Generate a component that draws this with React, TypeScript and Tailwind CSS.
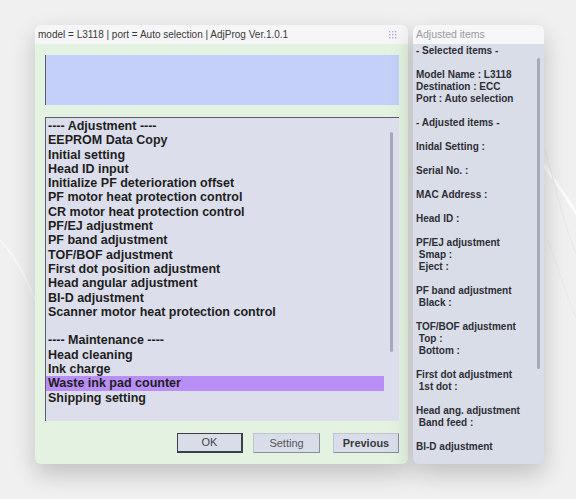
import React from "react";

const adjustItems: { t: string; sel?: boolean }[] = [
  { t: "---- Adjustment ----" },
  { t: "EEPROM Data Copy" },
  { t: "Initial setting" },
  { t: "Head ID input" },
  { t: "Initialize PF deterioration offset" },
  { t: "PF motor heat protection control" },
  { t: "CR motor heat protection control" },
  { t: "PF/EJ adjustment" },
  { t: "PF band adjustment" },
  { t: "TOF/BOF adjustment" },
  { t: "First dot position adjustment" },
  { t: "Head angular adjustment" },
  { t: "BI-D adjustment" },
  { t: "Scanner motor heat protection control" },
  { t: "\u00a0" },
  { t: "---- Maintenance ----" },
  { t: "Head cleaning" },
  { t: "Ink charge" },
  { t: "Waste ink pad counter", sel: true },
  { t: "Shipping setting" },
];

const rightLines: string[] = [
  "- Selected items -",
  "",
  "Model Name : L3118",
  "Destination : ECC",
  "Port : Auto selection",
  "",
  "- Adjusted items -",
  "",
  "Inidal Setting :",
  "",
  "Serial No. :",
  "",
  "MAC Address :",
  "",
  "Head ID :",
  "",
  "PF/EJ adjustment",
  " Smap :",
  " Eject :",
  "",
  "PF band adjustment",
  " Black :",
  "",
  "TOF/BOF adjustment",
  " Top :",
  " Bottom :",
  "",
  "First dot adjustment",
  " 1st dot :",
  "",
  "Head ang. adjustment",
  " Band feed :",
  "",
  "BI-D adjustment",
];

function Grip() {
  return (
    <svg width="8" height="8" viewBox="0 0 8 8" className="block">
      {[0, 1, 2].map((r) =>
        [0, 1, 2].map((c) => (
          <rect key={`${r}-${c}`} x={c * 3} y={r * 3} width="1.4" height="1.4" fill="#c79be0" />
        ))
      )}
    </svg>
  );
}

export default function App() {
  return (
    <div className="relative w-[576px] h-[499px] overflow-hidden bg-[#f0f0f1]" style={{ fontFamily: '"Liberation Sans", Arial, sans-serif' }}>
      <svg className="absolute inset-0" width="576" height="499" viewBox="0 0 576 499">
        <path d="M430 70 C 520 110, 560 190, 600 250" stroke="#ffffff" strokeWidth="3" fill="none" opacity="0.7" />
        <path d="M545 150 C 562 210, 572 260, 600 300" stroke="#e8e8ea" strokeWidth="1" fill="none" />
        <path d="M548 240 C 566 290, 576 330, 600 360" stroke="#eaeaec" strokeWidth="1" fill="none" />
        <path d="M0 240 C 15 255, 25 275, 35 300" stroke="#f7f7f8" strokeWidth="2" fill="none" />
      </svg>
      <div className="relative flex gap-[5px] pl-[35px] pt-[25px]">
        {/* Main window */}
        <div className="w-[373px] h-[439px] rounded-[6px] overflow-hidden bg-[#e4f2e1] shadow-[0_10px_24px_rgba(0,0,0,0.2)] flex flex-col">
          <div className="h-[19px] bg-[#f6f5f8] flex items-center justify-between pl-[3px] pr-[11px]">
            <span className="text-[10px] text-[#3a3a3a] whitespace-nowrap">
              model = L3118 | port = Auto selection | AdjProg Ver.1.0.1
            </span>
            <Grip />
          </div>
          <div className="flex-1 flex flex-col pl-[10px] pr-[9px] pt-[11px]">
            <div className="h-[50px] bg-[#c5d0f8] border-l border-[#5a5e6a]" />
            <div className="mt-[12px] h-[304px] bg-[#dcdfeb] border-l border-t border-[#5a5e6a] relative pt-[1px]">
              <div className="absolute left-[344px] top-[14px] w-[3px] h-[220px] rounded-full bg-[#a6aab6]" />
              <ul className="text-[12.5px] font-bold leading-[14.3px] text-[#1e1e1e]">
                {adjustItems.map((it, i) => (
                  <li
                    key={i}
                    className={
                      it.sel
                        ? "pl-[2px] w-[338px] bg-[#b98ef6] whitespace-nowrap"
                        : "pl-[2px] whitespace-nowrap"
                    }
                  >
                    {it.t}
                  </li>
                ))}
              </ul>
            </div>
            <div className="mt-[12px] flex justify-end gap-[10px]">
              <button className="w-[66px] h-[20px] bg-[#d8dde9] border border-[#3c3f48] border-r-2 border-b-2 text-[11px] text-[#444]">
                OK
              </button>
              <button className="w-[67px] h-[20px] bg-[#d8dde9] border border-[#c0c4cc] border-r-[#8a8e98] border-b-[#8a8e98] text-[11px] text-[#555] mr-[3px]">
                Setting
              </button>
              <button className="w-[66px] h-[20px] bg-[#d8dde9] border border-[#c0c4cc] border-r-[#8a8e98] border-b-[#8a8e98] text-[11px] font-bold text-[#3a3a3a]">
                Previous
              </button>
            </div>
          </div>
        </div>

        {/* Right panel */}
        <div className="w-[131px] h-[439px] rounded-[6px] overflow-hidden bg-[#d9dde7] shadow-[0_10px_24px_rgba(0,0,0,0.2)] flex flex-col">
          <div className="h-[19px] bg-[#f7f7f9] flex items-center pl-[3px]">
            <span className="text-[10.5px] text-[#9a9a9e]">Adjusted items</span>
          </div>
          <div className="relative flex-1 pl-[3px] pt-[1px]">
            <div className="absolute left-[124px] top-[14px] w-[3px] h-[311px] rounded-full bg-[#a6aab6]" />
            {rightLines.map((l, i) => (
              <div key={i} className="h-[12px] text-[10px] leading-[12px] font-bold text-[#2e2e36] whitespace-pre">
                {l === "" ? "\u00a0" : l}
              </div>
            ))}
          </div>
        </div>
      </div>
    </div>
  );
}
